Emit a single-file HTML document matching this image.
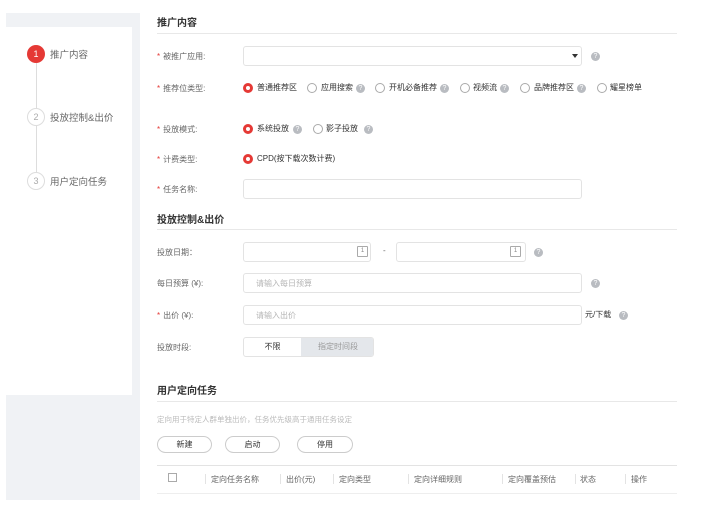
<!DOCTYPE html>
<html><head><meta charset="utf-8"><style>
*{margin:0;padding:0;box-sizing:border-box}
body{width:727px;height:505px;background:#fff;position:relative;overflow:hidden;font-family:"Liberation Sans","Noto Sans CJK SC",sans-serif;font-size:8px;color:#666}
.a{position:absolute;white-space:nowrap}
.t{font-weight:bold;color:#333;font-size:10px}
.div{position:absolute;left:157px;width:520px;height:1px;background:#e8e8e8}
.lbl{position:absolute;left:157px;color:#666;line-height:12px}
.lbl b{color:#e53935;font-weight:normal;margin-right:3px}
.in{position:absolute;border:1px solid #e3e3e3;border-radius:3px;background:#fff}
.ph{color:#b5b5b5;position:absolute;left:12px;top:4px}
.r{position:absolute;width:10px;height:10px;border:1px solid #aaa;border-radius:50%;background:#fff}
.r.on{border:3px solid #e53935}
.q{position:absolute;width:9px;height:9px;border-radius:50%;background:#b9bcc1;color:#fff;font-size:7px;line-height:9px;text-align:center}
.btn{position:absolute;top:436px;height:17px;border:1px solid #ccc;border-radius:9px;text-align:center;line-height:15px;color:#333}
.sep{position:absolute;top:474px;width:1px;height:10px;background:#e3e3e3}
</style></head><body>
<div class="a" style="left:6px;top:13px;width:134px;height:487px;background:#f0f2f5"></div>
<div class="a" style="left:6px;top:27px;width:126px;height:368px;background:#fff"></div>
<div class="a" style="left:36px;top:63px;width:1px;height:110px;background:#ddd"></div>
<div class="a" style="left:27px;top:45px;width:18px;height:18px;border-radius:50%;background:#e53935;color:#fff;text-align:center;line-height:18px;font-size:9px">1</div>
<div class="a" style="left:27px;top:108px;width:18px;height:18px;border-radius:50%;background:#fff;border:1px solid #ddd;color:#aaa;text-align:center;line-height:16px;font-size:9px">2</div>
<div class="a" style="left:27px;top:172px;width:18px;height:18px;border-radius:50%;background:#fff;border:1px solid #ddd;color:#aaa;text-align:center;line-height:16px;font-size:9px">3</div>
<div class="a" style="left:50px;top:47px;color:#666;font-size:9.5px">推广内容</div>
<div class="a" style="left:50px;top:110px;color:#666;font-size:9.5px">投放控制&amp;出价</div>
<div class="a" style="left:50px;top:174px;color:#666;font-size:9.5px">用户定向任务</div>

<div class="a t" style="left:157px;top:14px">推广内容</div>
<div class="div" style="top:33px"></div>
<div class="lbl" style="top:51px"><b>*</b>被推广应用:</div>
<div class="in" style="left:243px;top:46px;width:339px;height:20px"></div>
<div class="a" style="left:572px;top:54px;border:3px solid transparent;border-top:4px solid #333"></div>
<div class="q" style="left:591px;top:52px">?</div>

<div class="lbl" style="top:83px"><b>*</b>推荐位类型:</div>
<div class="r on" style="left:243px;top:83px"></div><div class="a" style="left:257px;top:82px;color:#333">普通推荐区</div>
<div class="r" style="left:307px;top:83px"></div><div class="a" style="left:321px;top:82px;color:#333">应用搜索</div><div class="q" style="left:356px;top:84px">?</div>
<div class="r" style="left:375px;top:83px"></div><div class="a" style="left:389px;top:82px;color:#333">开机必备推荐</div><div class="q" style="left:440px;top:84px">?</div>
<div class="r" style="left:460px;top:83px"></div><div class="a" style="left:473px;top:82px;color:#333">视频流</div><div class="q" style="left:500px;top:84px">?</div>
<div class="r" style="left:520px;top:83px"></div><div class="a" style="left:534px;top:82px;color:#333">品牌推荐区</div><div class="q" style="left:577px;top:84px">?</div>
<div class="r" style="left:597px;top:83px"></div><div class="a" style="left:610px;top:82px;color:#333">耀星榜单</div>

<div class="lbl" style="top:124px"><b>*</b>投放模式:</div>
<div class="r on" style="left:243px;top:124px"></div><div class="a" style="left:257px;top:123px;color:#333">系统投放</div><div class="q" style="left:293px;top:125px">?</div>
<div class="r" style="left:313px;top:124px"></div><div class="a" style="left:326px;top:123px;color:#333">影子投放</div><div class="q" style="left:364px;top:125px">?</div>

<div class="lbl" style="top:154px"><b>*</b>计费类型:</div>
<div class="r on" style="left:243px;top:154px"></div><div class="a" style="left:257px;top:153px;color:#333">CPD(按下载次数计费)</div>

<div class="lbl" style="top:184px"><b>*</b>任务名称:</div>
<div class="in" style="left:243px;top:179px;width:339px;height:20px"></div>

<div class="a t" style="left:157px;top:211px">投放控制&amp;出价</div>
<div class="div" style="top:229px"></div>
<div class="lbl" style="top:247px">投放日期：</div>
<div class="in" style="left:243px;top:242px;width:128px;height:20px"></div>
<div class="in" style="left:396px;top:242px;width:130px;height:20px"></div>
<div class="a" style="left:357px;top:246px;width:11px;height:11px;border:1px solid #aaa;border-radius:1px;font-size:6px;line-height:9px;text-align:center;color:#888">1</div>
<div class="a" style="left:510px;top:246px;width:11px;height:11px;border:1px solid #aaa;border-radius:1px;font-size:6px;line-height:9px;text-align:center;color:#888">1</div>
<div class="a" style="left:383px;top:246px;color:#666">-</div>
<div class="q" style="left:534px;top:248px">?</div>

<div class="lbl" style="top:278px">每日预算 (¥):</div>
<div class="in" style="left:243px;top:273px;width:339px;height:20px"><span class="ph">请输入每日预算</span></div>
<div class="q" style="left:591px;top:279px">?</div>

<div class="lbl" style="top:310px"><b>*</b>出价 (¥):</div>
<div class="in" style="left:243px;top:305px;width:339px;height:20px"><span class="ph">请输入出价</span></div>
<div class="a" style="left:585px;top:309px;color:#333">元/下载</div>
<div class="q" style="left:619px;top:311px">?</div>

<div class="lbl" style="top:342px">投放时段:</div>
<div class="in" style="left:243px;top:337px;width:131px;height:20px;overflow:hidden">
<div class="a" style="left:0;top:0;width:57px;height:18px;text-align:center;line-height:18px;color:#333">不限</div>
<div class="a" style="left:57px;top:0;width:74px;height:18px;background:#e4e7eb;text-align:center;line-height:18px;color:#999">指定时间段</div></div>

<div class="a t" style="left:157px;top:382px">用户定向任务</div>
<div class="div" style="top:401px"></div>
<div class="a" style="left:157px;top:414px;color:#bbb;font-size:7.5px">定向用于特定人群单独出价，任务优先级高于通用任务设定</div>
<div class="btn" style="left:157px;width:55px">新建</div>
<div class="btn" style="left:225px;width:55px">启动</div>
<div class="btn" style="left:297px;width:56px">停用</div>
<div class="a" style="left:157px;top:465px;width:520px;height:1px;background:#e3e3e3"></div>
<div class="a" style="left:157px;top:493px;width:520px;height:1px;background:#eee"></div>
<div class="a" style="left:168px;top:473px;width:9px;height:9px;border:1px solid #aaa"></div>
<div class="sep" style="left:205px"></div><div class="a" style="left:211px;top:474px">定向任务名称</div>
<div class="sep" style="left:280px"></div><div class="a" style="left:286px;top:474px">出价(元)</div>
<div class="sep" style="left:333px"></div><div class="a" style="left:339px;top:474px">定向类型</div>
<div class="sep" style="left:408px"></div><div class="a" style="left:414px;top:474px">定向详细规则</div>
<div class="sep" style="left:502px"></div><div class="a" style="left:508px;top:474px">定向覆盖预估</div>
<div class="sep" style="left:575px"></div><div class="a" style="left:580px;top:474px">状态</div>
<div class="sep" style="left:625px"></div><div class="a" style="left:631px;top:474px">操作</div>
</body></html>
